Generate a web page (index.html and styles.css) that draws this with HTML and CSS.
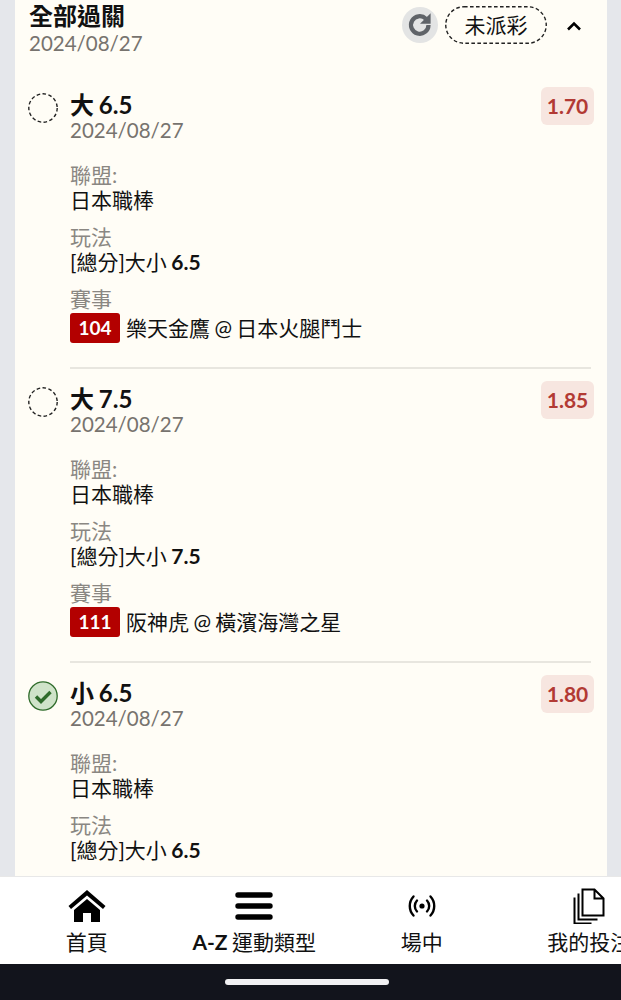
FILE: index.html
```html
<!DOCTYPE html>
<html lang="zh-Hant">
<head>
<meta charset="utf-8">
<title>全部過關</title>
<link rel="stylesheet" href="styles.css">
</head>
<body>
<div class="app">
  <main class="main">
    <section class="card">
      <header class="head">
        <div class="head-text">
          <div class="title">全部過關</div>
          <div class="date">2024/08/27</div>
        </div>
        <div class="refresh">
          <svg viewBox="0 0 24 24" width="30" height="30"><path d="M18.800 12a7 7 0 1 1-2.100-5" fill="none" stroke="#5f6368" stroke-width="3.400"/><path d="M20.500 2.500v8.500h-8.500z" fill="#5f6368"/></svg>
        </div>
        <div class="status">
          <svg class="status-line" viewBox="0 0 102 38" width="102" height="38"><rect x="0.750" y="0.750" width="100.500" height="36.500" rx="18.250" fill="none" stroke="#222" stroke-width="1.400" stroke-dasharray="3.600 2.400"/></svg>
          未派彩
        </div>
        <svg class="chev" viewBox="0 0 16 10" width="16" height="10"><path d="M2 8.500l6-6 6 6" fill="none" stroke="#000" stroke-width="2.600"/></svg>
      </header>

      <article class="item">
        <div class="mark">
          <svg viewBox="0 0 30 30" width="30" height="30"><circle cx="15" cy="15" r="14.200" fill="none" stroke="#222" stroke-width="1.400" stroke-dasharray="3.600 2.400"/></svg>
        </div>
        <div class="body">
          <div class="top">
            <div>
              <div class="pick">大 6.5</div>
              <div class="date">2024/08/27</div>
            </div>
            <div class="odds">1.70</div>
          </div>
          <div class="label first">聯盟:</div>
          <div class="value">日本職棒</div>
          <div class="label">玩法</div>
          <div class="value">[總分]大小 <b>6.5</b></div>
          <div class="label">賽事</div>
          <div class="match"><span class="num">104</span>樂天金鷹 @ 日本火腿鬥士</div>
        </div>
      </article>

      <article class="item">
        <div class="mark">
          <svg viewBox="0 0 30 30" width="30" height="30"><circle cx="15" cy="15" r="14.200" fill="none" stroke="#222" stroke-width="1.400" stroke-dasharray="3.600 2.400"/></svg>
        </div>
        <div class="body">
          <div class="top">
            <div>
              <div class="pick">大 7.5</div>
              <div class="date">2024/08/27</div>
            </div>
            <div class="odds">1.85</div>
          </div>
          <div class="label first">聯盟:</div>
          <div class="value">日本職棒</div>
          <div class="label">玩法</div>
          <div class="value">[總分]大小 <b>7.5</b></div>
          <div class="label">賽事</div>
          <div class="match"><span class="num">111</span>阪神虎 @ 橫濱海灣之星</div>
        </div>
      </article>

      <article class="item">
        <div class="mark">
          <svg viewBox="0 0 30 30" width="30" height="30"><circle cx="15" cy="15" r="14.200" fill="#cfe3c9" stroke="#2e6b2a" stroke-width="1.300"/><path d="M8 15.500l5 5 9.500-9.500" fill="none" stroke="#2e6b2a" stroke-width="3.400"/></svg>
        </div>
        <div class="body">
          <div class="top">
            <div>
              <div class="pick">小 6.5</div>
              <div class="date">2024/08/27</div>
            </div>
            <div class="odds">1.80</div>
          </div>
          <div class="label first">聯盟:</div>
          <div class="value">日本職棒</div>
          <div class="label">玩法</div>
          <div class="value">[總分]大小 <b>6.5</b></div>
        </div>
      </article>
    </section>
  </main>

  <nav class="nav">
    <div class="tab">
      <svg viewBox="0 0 38 36" width="38" height="36"><path d="M19 2L0.500 18l2.500 3L19 7.500 35 21l2.500-3z" fill="#000"/><path d="M19 11L6 22v12h9v-9h8v9h9V22z" fill="#000"/></svg>
      <span>首頁</span>
    </div>
    <div class="tab">
      <svg viewBox="0 0 38 36" width="38" height="36"><path d="M3 7h32M3 18h32M3 29h32" stroke="#000" stroke-width="5.400" stroke-linecap="round" fill="none"/></svg>
      <span class="tight"><b>A-Z</b> 運動類型</span>
    </div>
    <div class="tab">
      <svg viewBox="0 0 38 36" width="38" height="36"><circle cx="19" cy="18" r="2.600" fill="#000"/><path d="M14 12.500a8 8 0 0 0 0 11M24 12.500a8 8 0 0 1 0 11M10.500 8.500a14 14 0 0 0 0 19M27.500 8.500a14 14 0 0 1 0 19" fill="none" stroke="#000" stroke-width="2.400" stroke-linecap="round"/></svg>
      <span>場中</span>
    </div>
    <div class="tab">
      <svg viewBox="0 0 38 36" width="38" height="36"><path d="M12.500 1.500h12l9 9v17h-21zM24.500 1.500v9h9" fill="none" stroke="#000" stroke-width="2"/><path d="M8.500 5.500v26h19M4.500 9.500v26h17" fill="none" stroke="#000" stroke-width="2"/></svg>
      <span>我的投注</span>
    </div>
  </nav>

  <div class="sysbar"><div class="pill"></div></div>
</div>
</body>
</html>
```

FILE: styles.css
```css
* { box-sizing: border-box; }

html, body {
  margin: 0;
  padding: 0;
  height: 1000px;
  overflow: hidden;
}

body {
  font-family: Lato, "Noto Sans CJK TC", sans-serif;
  color: #111;
  background: #e5e7eb;
}

.app {
  display: flex;
  flex-direction: column;
  width: 621px;
  height: 1000px;
}

.main {
  height: 876px;
  padding: 0 14px 0 15px;
  overflow: hidden;
  flex: none;
}

.card {
  background: #fffdf6;
  padding: 0 16px 0 13px;
  min-height: 876px;
}

.head {
  display: flex;
  align-items: center;
  height: 56px;
  margin-right: -3px;
  padding-left: 1px;
}

.head-text { flex: 1; }

.title {
  font-size: 24px;
  line-height: 30px;
  font-weight: 700;
  margin-top: 1px;
}

.date {
  font-size: 20.500px;
  line-height: 24px;
  color: #77736e;
}

.head .date { line-height: 25px; }

.refresh {
  width: 36px;
  height: 36px;
  margin: -6px 7px 0 0;
  border-radius: 50%;
  background: #e3e4e4;
  display: flex;
  align-items: center;
  justify-content: center;
}

.status {
  position: relative;
  width: 102px;
  height: 38px;
  margin-top: -6px;
  font-size: 21px;
  line-height: 37px;
  text-align: center;
}

.status-line {
  position: absolute;
  left: 0;
  top: 0;
}

.chev { margin: -4px 12px 0 19px; }

.item {
  display: flex;
  margin-top: 31px;
}

.item + .item {
  margin-top: 12px;
}

.mark {
  flex: none;
  width: 30px;
  height: 30px;
  margin: 6px 12px 0 0;
}

.mark svg { display: block; }

.body {
  flex: 1;
  min-width: 0;
  height: 282px;
  border-bottom: 2px solid #e8e6df;
}

.item:last-child .body { border-bottom: 0; }

.top {
  display: flex;
  justify-content: space-between;
  align-items: flex-start;
  margin-right: -3px;
}

.pick {
  font-size: 24px;
  line-height: 27px;
  font-weight: 700;
  padding-top: 4px;
  word-spacing: -1px;
}

.odds {
  width: 53px;
  height: 38px;
  border-radius: 6px;
  background: #f7e6e0;
  color: #b23a34;
  font-size: 21px;
  font-weight: 700;
  line-height: 38px;
  text-align: center;
}

.label {
  font-size: 21px;
  line-height: 24px;
  color: #8a8782;
  margin-top: 13px;
}

.label.first { margin-top: 21px; }

.value {
  font-size: 21px;
  line-height: 24px;
  padding-top: 1px;
  word-spacing: -1px;
}

.match {
  display: flex;
  align-items: center;
  margin-top: 2px;
  font-size: 21px;
  line-height: 30px;
  word-spacing: -1px;
}

.num {
  width: 50px;
  height: 30px;
  margin-right: 6px;
  border-radius: 3px;
  background: #b30000;
  color: #fff;
  font-size: 19px;
  font-weight: 700;
  text-align: center;
}

.nav {
  flex: none;
  display: flex;
  height: 88px;
  background: #fff;
  border-top: 1px solid #e8e8e8;
  overflow: hidden;
}

.tab {
  flex: none;
  width: 167.500px;
  display: flex;
  flex-direction: column;
  align-items: center;
  gap: 3px;
  padding-top: 11px;
  font-size: 21px;
  line-height: 30px;
  color: #111;
  white-space: nowrap;
}

.tab:first-child { margin-left: 3px; }

.tab svg { display: block; }

.tight { word-spacing: -1px; }

.sysbar {
  flex: none;
  height: 36px;
  background: #12141c;
  display: flex;
  justify-content: center;
  padding-top: 15px;
}

.pill {
  width: 164px;
  height: 6px;
  margin-left: -7px;
  border-radius: 3px;
  background: #f1f1f3;
}
```
